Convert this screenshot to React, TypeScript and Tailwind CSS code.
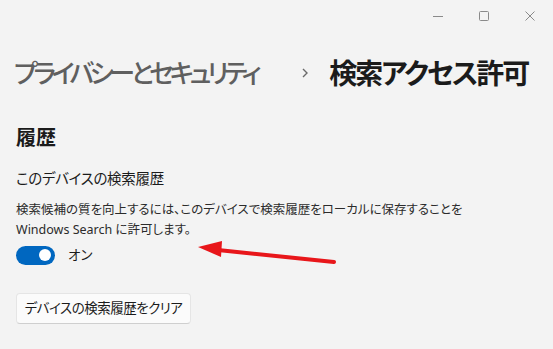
import React from "react";

const font = {
  fontFamily: '"Noto Sans", "Noto Sans CJK JP", sans-serif',
};

export default function App() {
  return (
    <div
      className="relative w-[553px] h-[349px] overflow-hidden bg-[#f3f3f3] text-[#1b1b1b] [font-feature-settings:'palt']"
      style={font}
    >
      {/* title bar */}
      <div className="flex h-[32px] justify-end items-center">
        <div className="flex h-full w-[46px] items-center justify-center">
          <svg width="10" height="10" viewBox="0 0 10 10">
            <path d="M0 5.5h10" stroke="#8a8a8a" strokeWidth="1" />
          </svg>
        </div>
        <div className="flex h-full w-[46px] items-center justify-center">
          <svg width="10" height="10" viewBox="0 0 10 10">
            <rect x="0.5" y="0.5" width="9" height="9" rx="1" fill="none" stroke="#8a8a8a" strokeWidth="1" />
          </svg>
        </div>
        <div className="flex h-full w-[46px] items-center justify-center">
          <svg width="10" height="10" viewBox="0 0 10 10">
            <path d="M0.5 0.5l9 9M9.5 0.5l-9 9" stroke="#8a8a8a" strokeWidth="1" />
          </svg>
        </div>
      </div>

      {/* breadcrumb */}
      <div className="flex items-center whitespace-nowrap pl-[14px] mt-[22px] h-[38px] leading-[38px]">
        <span className="text-[26px] text-[#5f5f5f] font-medium tracking-[-4.4px]">プライバシーとセキュリティ</span>
        <span className="ml-[44px] mr-[20px] flex items-center">
          <svg width="8" height="12" viewBox="0 0 8 12">
            <path d="M2 2l4 4-4 4" fill="none" stroke="#6a6a6a" strokeWidth="1.4" />
          </svg>
        </span>
        <span className="text-[28px] text-[#1b1b1b] font-semibold tracking-[-2px]">検索アクセス許可</span>
      </div>

      {/* section */}
      <div className="pl-[16px] mt-[34px]">
        <div className="text-[20px] leading-[24px] font-semibold">履歴</div>
        <div className="mt-[18px] text-[14.5px] leading-[20px] text-[#1b1b1b] tracking-[-0.3px]">このデバイスの検索履歴</div>
        <div className="mt-[12px] text-[12.5px] leading-[20px] text-[#2b2b2b] w-[480px]">
          <div className="whitespace-nowrap">検索候補の質を向上するには、このデバイスで検索履歴をローカルに保存することを</div>
          <div>Windows Search に許可します。</div>
        </div>
        <div className="mt-[5px] flex items-center gap-[13px]">
          <div className="flex h-[19px] w-[39px] items-center justify-end rounded-full bg-[#0067c0] pr-[4px]">
            <div className="h-[12px] w-[12px] rounded-full bg-white" />
          </div>
          <span className="text-[13.5px] leading-[20px]">オン</span>
        </div>
        <div className="mt-[28px]">
          <button className="h-[31px] w-[175px] rounded-[4px] border border-[#e5e5e5] border-b-[#cfcfcf] bg-[#fbfbfb] text-[13.5px] tracking-[-0.5px] text-[#1b1b1b]">
            デバイスの検索履歴をクリア
          </button>
        </div>
      </div>

      {/* red annotation arrow */}
      <svg className="absolute left-0 top-0 pointer-events-none" width="553" height="349" viewBox="0 0 553 349">
        <path d="M218 250 L334 262" stroke="#e8161a" strokeWidth="4" strokeLinecap="round" />
        <path d="M198 247 L222 241 L221 257 Z" fill="#e8161a" />
      </svg>
    </div>
  );
}
